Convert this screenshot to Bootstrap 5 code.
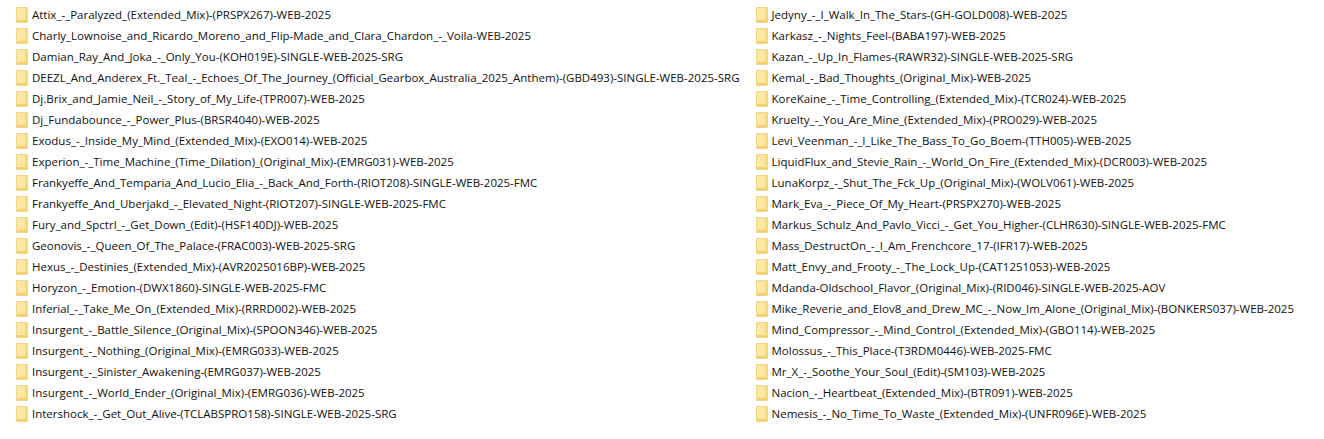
<!DOCTYPE html>
<html lang="en">
<head>
  <meta charset="UTF-8">
  <title>Folders</title>
  <link href="https://cdn.jsdelivr.net/npm/bootstrap@5.3.3/dist/css/bootstrap.min.css" rel="stylesheet">
  <style>
    body {
      background: #fff;
      overflow: hidden;
    }
    .folder-pane {
      padding: 4px 0 0 16px;
    }
    .folder-pane-left {
      flex: 0 0 739px;
    }
    .folder-pane-right {
      flex: 1 1 0;
      min-width: 0;
    }
    .folder-row {
      height: 21px;
      font-family: "Open Sans", "Liberation Sans", sans-serif;
      font-size: 11.5px;
      color: #111;
      white-space: nowrap;
      gap: 4px;
    }
    .folder-row svg {
      width: 12px;
      height: 16px;
      flex: none;
    }
  </style>
</head>
<body>
  <div class="d-flex">
    <div class="folder-pane folder-pane-left" id="leftPane"></div>
    <div class="folder-pane folder-pane-right" id="rightPane"></div>
  </div>

  <script>
    const leftNames = [
      'Attix_-_Paralyzed_(Extended_Mix)-(PRSPX267)-WEB-2025',
      'Charly_Lownoise_and_Ricardo_Moreno_and_Flip-Made_and_Clara_Chardon_-_Voila-WEB-2025',
      'Damian_Ray_And_Joka_-_Only_You-(KOH019E)-SINGLE-WEB-2025-SRG',
      'DEEZL_And_Anderex_Ft._Teal_-_Echoes_Of_The_Journey_(Official_Gearbox_Australia_2025_Anthem)-(GBD493)-SINGLE-WEB-2025-SRG',
      'Dj.Brix_and_Jamie_Neil_-_Story_of_My_Life-(TPR007)-WEB-2025',
      'Dj_Fundabounce_-_Power_Plus-(BRSR4040)-WEB-2025',
      'Exodus_-_Inside_My_Mind_(Extended_Mix)-(EXO014)-WEB-2025',
      'Experion_-_Time_Machine_(Time_Dilation)_(Original_Mix)-(EMRG031)-WEB-2025',
      'Frankyeffe_And_Temparia_And_Lucio_Elia_-_Back_And_Forth-(RIOT208)-SINGLE-WEB-2025-FMC',
      'Frankyeffe_And_Uberjakd_-_Elevated_Night-(RIOT207)-SINGLE-WEB-2025-FMC',
      'Fury_and_Spctrl_-_Get_Down_(Edit)-(HSF140DJ)-WEB-2025',
      'Geonovis_-_Queen_Of_The_Palace-(FRAC003)-WEB-2025-SRG',
      'Hexus_-_Destinies_(Extended_Mix)-(AVR2025016BP)-WEB-2025',
      'Horyzon_-_Emotion-(DWX1860)-SINGLE-WEB-2025-FMC',
      'Inferial_-_Take_Me_On_(Extended_Mix)-(RRRD002)-WEB-2025',
      'Insurgent_-_Battle_Silence_(Original_Mix)-(SPOON346)-WEB-2025',
      'Insurgent_-_Nothing_(Original_Mix)-(EMRG033)-WEB-2025',
      'Insurgent_-_Sinister_Awakening-(EMRG037)-WEB-2025',
      'Insurgent_-_World_Ender_(Original_Mix)-(EMRG036)-WEB-2025',
      'Intershock_-_Get_Out_Alive-(TCLABSPRO158)-SINGLE-WEB-2025-SRG'
    ];
    const rightNames = [
      'Jedyny_-_I_Walk_In_The_Stars-(GH-GOLD008)-WEB-2025',
      'Karkasz_-_Nights_Feel-(BABA197)-WEB-2025',
      'Kazan_-_Up_In_Flames-(RAWR32)-SINGLE-WEB-2025-SRG',
      'Kemal_-_Bad_Thoughts_(Original_Mix)-WEB-2025',
      'KoreKaine_-_Time_Controlling_(Extended_Mix)-(TCR024)-WEB-2025',
      'Kruelty_-_You_Are_Mine_(Extended_Mix)-(PRO029)-WEB-2025',
      'Levi_Veenman_-_I_Like_The_Bass_To_Go_Boem-(TTH005)-WEB-2025',
      'LiquidFlux_and_Stevie_Rain_-_World_On_Fire_(Extended_Mix)-(DCR003)-WEB-2025',
      'LunaKorpz_-_Shut_The_Fck_Up_(Original_Mix)-(WOLV061)-WEB-2025',
      'Mark_Eva_-_Piece_Of_My_Heart-(PRSPX270)-WEB-2025',
      'Markus_Schulz_And_Pavlo_Vicci_-_Get_You_Higher-(CLHR630)-SINGLE-WEB-2025-FMC',
      'Mass_DestructOn_-_I_Am_Frenchcore_17-(IFR17)-WEB-2025',
      'Matt_Envy_and_Frooty_-_The_Lock_Up-(CAT1251053)-WEB-2025',
      'Mdanda-Oldschool_Flavor_(Original_Mix)-(RID046)-SINGLE-WEB-2025-AOV',
      'Mike_Reverie_and_Elov8_and_Drew_MC_-_Now_Im_Alone_(Original_Mix)-(BONKERS037)-WEB-2025',
      'Mind_Compressor_-_Mind_Control_(Extended_Mix)-(GBO114)-WEB-2025',
      'Molossus_-_This_Place-(T3RDM0446)-WEB-2025-FMC',
      'Mr_X_-_Soothe_Your_Soul_(Edit)-(SM103)-WEB-2025',
      'Nacion_-_Heartbeat_(Extended_Mix)-(BTR091)-WEB-2025',
      'Nemesis_-_No_Time_To_Waste_(Extended_Mix)-(UNFR096E)-WEB-2025'
    ];

    // folder icon, pale body with a darker back edge and bottom
    const folderIcon = `
      <svg viewBox="0 0 12 16" aria-hidden="true">
        <path d="M0 0H12V16H0Z" fill="#fde7a4"/>
        <path d="M0.5 0.5H11.5V15.5H0.5Z" fill="none" stroke="#efd78f"/>
        <path d="M9 1H11V15H9Z" fill="#f9d878"/>
        <path d="M1 13H11V15H1Z" fill="#f6d06b"/>
      </svg>`;

    function fillPane(id, names) {
      const pane = document.getElementById(id);
      names.forEach(name => {
        const row = document.createElement('div');
        row.className = 'folder-row d-flex align-items-center';
        row.innerHTML = folderIcon + `<span>${name}</span>`;
        pane.appendChild(row);
      });
    }

    fillPane('leftPane', leftNames);
    fillPane('rightPane', rightNames);
  </script>
  <script src="https://cdn.jsdelivr.net/npm/bootstrap@5.3.3/dist/js/bootstrap.bundle.min.js"></script>
</body>
</html>
